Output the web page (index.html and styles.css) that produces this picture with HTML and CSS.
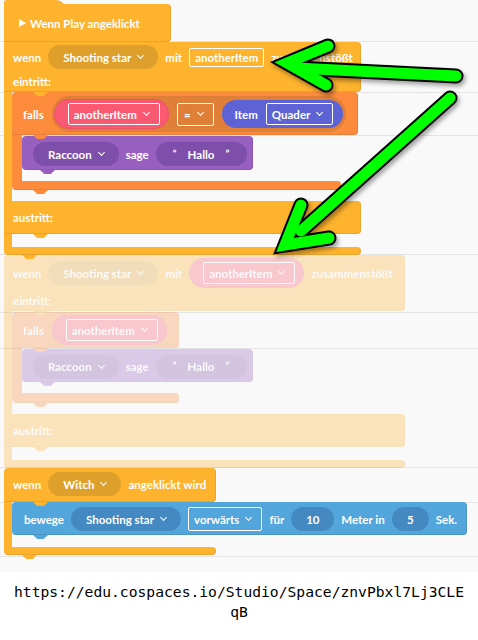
FILE: index.html
```html
<!DOCTYPE html>
<html lang="de">
<head>
  <meta charset="UTF-8" />
  <meta name="viewport" content="width=device-width, initial-scale=1.0" />
  <title>CoSpaces Code</title>
  <link rel="stylesheet" href="styles.css">
</head>
<body>
  <div class="workspace">
    <div class="script">
      <div class="hat">
        <svg class="play" viewBox="0 0 7 8"><path d="M0 0L7 4L0 8Z" fill="#fff"/></svg>
        <span>Wenn Play angeklickt</span>
      </div>

      <!-- wenn ... zusammenstößt -->
      <div class="evt evt-main">
        <div class="sec head">
          <div class="row">
            <span>wenn</span>
            <span class="pill pill-yel dd">Shooting star</span>
            <span>mit</span>
            <span class="box box-sm">anotherItem</span>
            <span>zusammenstößt</span>
          </div>
          <div class="label">eintritt:</div>
        </div>
        <div class="mouth">
          <div class="falls falls-main">
            <div class="sec head">
              <span>falls</span>
              <span class="cond">
                <span class="pill pill-pink"><span class="box dd">anotherItem</span></span>
                <span class="box box-op dd">=</span>
                <span class="pill pill-item">Item <span class="box dd">Quader</span></span>
              </span>
            </div>
            <div class="mouth">
              <div class="stmt say">
                <span class="pill pill-pur dd">Raccoon</span>
                <span>sage</span>
                <span class="pill pill-pur quote"><span class="q">“</span>Hallo<span class="q">”</span></span>
              </div>
            </div>
            <div class="sec foot"></div>
          </div>
        </div>
        <div class="sec mid">austritt:</div>
        <div class="mouth empty"></div>
        <div class="sec foot"></div>
      </div>

      <!-- deaktivierte Kopie -->
      <div class="evt evt-ghost">
        <div class="sec head">
          <div class="row row-tall">
            <span>wenn</span>
            <span class="pill pill-yel dd">Shooting star</span>
            <span>mit</span>
            <span class="pill pill-pink"><span class="box dd">anotherItem</span></span>
            <span>zusammenstößt</span>
          </div>
          <div class="label">eintritt:</div>
        </div>
        <div class="mouth">
          <div class="falls falls-ghost">
            <div class="sec head">
              <span>falls</span>
              <span class="pill pill-pink"><span class="box dd">anotherItem</span></span>
            </div>
            <div class="mouth">
              <div class="stmt say">
                <span class="pill pill-pur dd">Raccoon</span>
                <span>sage</span>
                <span class="pill pill-pur quote"><span class="q">“</span>Hallo<span class="q">”</span></span>
              </div>
            </div>
            <div class="sec foot"></div>
          </div>
        </div>
        <div class="sec mid">austritt:</div>
        <div class="mouth empty"></div>
        <div class="sec foot"></div>
      </div>

      <!-- wenn Witch angeklickt wird -->
      <div class="evt evt-click">
        <div class="sec head">
          <div class="row">
            <span>wenn</span>
            <span class="pill pill-yel dd">Witch</span>
            <span>angeklickt wird</span>
          </div>
        </div>
        <div class="mouth">
          <div class="stmt move">
            <span>bewege</span>
            <span class="pill pill-blue dd">Shooting star</span>
            <span class="box box-lg dd">vorwärts</span>
            <span>für</span>
            <span class="pill pill-blue num">10</span>
            <span>Meter in</span>
            <span class="pill pill-blue num num-sm">5</span>
            <span>Sek.</span>
          </div>
        </div>
        <div class="sec foot"></div>
      </div>
    </div>

    <svg class="arrows" viewBox="0 0 478 572">
      <g fill="none" stroke="#000" stroke-width="15" stroke-linecap="round" stroke-linejoin="miter">
        <path d="M456 76L296 68"/>
        <path d="M328 46L287 63L326 85"/>
        <path d="M450 98L301 231"/>
        <path d="M301 205L285 245L329 238"/>
      </g>
      <g fill="none" stroke="#00ff00" stroke-width="11" stroke-linecap="round" stroke-linejoin="miter">
        <path d="M456 76L296 68"/>
        <path d="M328 46L287 63L326 85"/>
        <path d="M450 98L301 231"/>
        <path d="M301 205L285 245L329 238"/>
      </g>
    </svg>
  </div>

  <p class="url">https://edu.cospaces.io/Studio/Space/znvPbxl7Lj3CLEqB</p>
</body>
</html>
```

FILE: styles.css
```css
* { box-sizing: border-box; }
body { margin: 0; background: #fff; font-family: "Lato", "Liberation Sans", sans-serif; }

.workspace {
  position: relative;
  height: 572px;
  padding: 4px 0 0 4px;
  color: #fff;
  font-size: 11.5px;
  font-weight: 700;
  white-space: nowrap;
  background:
    linear-gradient(#e4e4e4, #e4e4e4) 0 41px / 100% 1px no-repeat,
    linear-gradient(#e4e4e4, #e4e4e4) 0 92px / 100% 1px no-repeat,
    linear-gradient(#e4e4e4, #e4e4e4) 0 135px / 100% 1px no-repeat,
    linear-gradient(#e4e4e4, #e4e4e4) 0 254px / 100% 1px no-repeat,
    linear-gradient(#e4e4e4, #e4e4e4) 0 312px / 100% 1px no-repeat,
    linear-gradient(#e4e4e4, #e4e4e4) 0 348px / 100% 1px no-repeat,
    linear-gradient(#e4e4e4, #e4e4e4) 0 467px / 100% 1px no-repeat,
    linear-gradient(#e4e4e4, #e4e4e4) 0 502px / 100% 1px no-repeat,
    linear-gradient(#e4e4e4, #e4e4e4) 0 556px / 100% 1px no-repeat,
    #f9f9f9;
}

.script { display: flex; flex-direction: column; align-items: flex-start; }

/* hat block */
.hat {
  position: relative;
  display: flex;
  align-items: center;
  gap: 4px;
  width: 167px;
  height: 38px;
  padding-left: 15px;
  background: #fdb32e;
  border-radius: 0 4px 4px 0;
  box-shadow: inset -1px -1px rgba(0, 0, 0, .08);
}
.hat::before {
  content: "";
  position: absolute;
  top: -4px;
  left: 0;
  width: 62px;
  height: 10px;
  background: #fdb32e;
  border-radius: 4px 16px 0 0;
}
.hat span { position: relative; }
.play { position: relative; width: 7px; height: 8px; }

/* C-shaped blocks */
.evt, .falls {
  display: flex;
  flex-direction: column;
  align-items: flex-start;
}
.evt { --c: #fdb32e; }
.falls { --c: #fc8b3c; }
.evt-main { --w: 357px; }
.evt-ghost { --w: 401px; opacity: .3; }
.evt-click { --w: 212px; }
.falls-main { --w: 346px; --fw: 329px; }
.falls-ghost { --w: 167px; --fw: 167px; }

.sec {
  position: relative;
  width: var(--w);
  background: var(--c);
  box-shadow: inset -1px -1px rgba(0, 0, 0, .08);
}
.sec::after, .stmt::after {
  content: "";
  position: absolute;
  top: 100%;
  left: 18px;
  width: 15px;
  height: 4px;
  z-index: 2;
  background: var(--c);
  clip-path: polygon(0 0, 100% 0, 72% 100%, 28% 100%);
}

.head { border-radius: 4px 4px 4px 0; }
.evt-main > .head { border-top-left-radius: 0; }
.evt > .head { padding: 3px 9px 2px; }
.evt > .head::after { left: 29px; }
.evt-click > .head { padding: 4px 9px 6px; }

.row { display: flex; align-items: center; gap: 7px; height: 24px; }
.row-tall { height: 30px; }
.label { height: 16px; line-height: 16px; margin-top: 5px; }

.mouth {
  display: flex;
  flex-direction: column;
  align-items: flex-start;
  border-left: 8px solid var(--c);
  padding-bottom: 11px;
}
.evt-ghost > .mouth { padding-top: 1px; }
.evt-click > .mouth { padding-bottom: 12px; }
.mouth.empty { height: 13px; padding: 0; }

.mid {
  display: flex;
  align-items: center;
  height: 33px;
  padding-left: 9px;
  border-radius: 0 4px 4px 0;
}
.mid::after { left: 29px; }
.foot { height: 8px; border-radius: 0 4px 4px 4px; }

.falls .head {
  display: flex;
  align-items: center;
  gap: 8px;
  padding: 4px 11px 3px;
}
.falls-ghost .head { padding: 3px 11px; }
.falls .head::after { left: 21px; }
.falls .mouth { border-left-width: 10px; padding: 1px 0 11px; }
.falls .foot { width: var(--fw); height: 9px; }
.falls-ghost .foot { height: 10px; }
.falls .foot::after { left: 21px; }

/* statement blocks */
.stmt {
  position: relative;
  display: flex;
  align-items: center;
  gap: 7px;
}
.say {
  --c: #975fc0;
  width: 231px;
  height: 34px;
  padding: 2px 8px 0 11px;
  background: var(--c);
  border-radius: 4px;
  box-shadow: inset -1px -1px rgba(0, 0, 0, .08);
}
.falls-ghost .say { height: 33px; }
.move {
  --c: #53a6db;
  width: 455px;
  height: 33px;
  padding: 1px 11px 0 12px;
  background: var(--c);
  border-radius: 4px;
  box-shadow: inset -1px -1px rgba(0, 0, 0, .1);
}
.move::after { left: 21px; }

/* inputs */
.pill {
  display: inline-flex;
  align-items: center;
  height: 24px;
  padding: 0 15px;
  border-radius: 12px;
}
.pill-yel { background: #dfa02b; }
.pill-pur { background: #7e4faa; }
.pill-blue { background: #4489c1; }
.pill-pink {
  height: 30px;
  padding: 0 9px 0 14px;
  border-radius: 15px;
  background: #f95a72;
  box-shadow: inset 0 0 0 1px rgba(160, 40, 60, .15);
}
.pill-item {
  height: 28px;
  gap: 8px;
  padding: 0 10px 0 13px;
  border-radius: 14px;
  background: #5d63d4;
}
.quote { gap: 11px; padding: 0 18px 0 17px; }
.q { font-size: 10px; margin-top: -3px; }
.num { justify-content: center; min-width: 43px; padding: 0 12px; }
.num-sm { min-width: 37px; }

.cond {
  display: inline-flex;
  align-items: center;
  gap: 8px;
  height: 36px;
  padding: 0 3px 0 2px;
  border-radius: 18px;
  background: #df7f38;
}

.box {
  display: inline-flex;
  align-items: center;
  height: 22px;
  padding: 0 5px;
  border: 1px solid #fff;
  border-radius: 2px;
}
.box.dd { padding-right: 10px; }
.box-sm { height: 19px; }
.box-lg { height: 24px; }
.box-op { height: 23px; padding-left: 6px; }

.dd::after {
  content: "";
  width: 4px;
  height: 4px;
  margin: -3px 0 0 7px;
  border-right: 1.5px solid #fff;
  border-bottom: 1.5px solid #fff;
  transform: rotate(45deg);
}

.arrows {
  position: absolute;
  left: 0;
  top: 0;
  width: 478px;
  height: 572px;
  pointer-events: none;
  filter: drop-shadow(2px 3px 2px rgba(0, 0, 0, .35));
}

.url {
  width: 455px;
  margin: 10px auto 0;
  font-family: "DejaVu Sans Mono", monospace;
  font-size: 14.67px;
  line-height: 20px;
  text-align: center;
  word-break: break-all;
}
```
